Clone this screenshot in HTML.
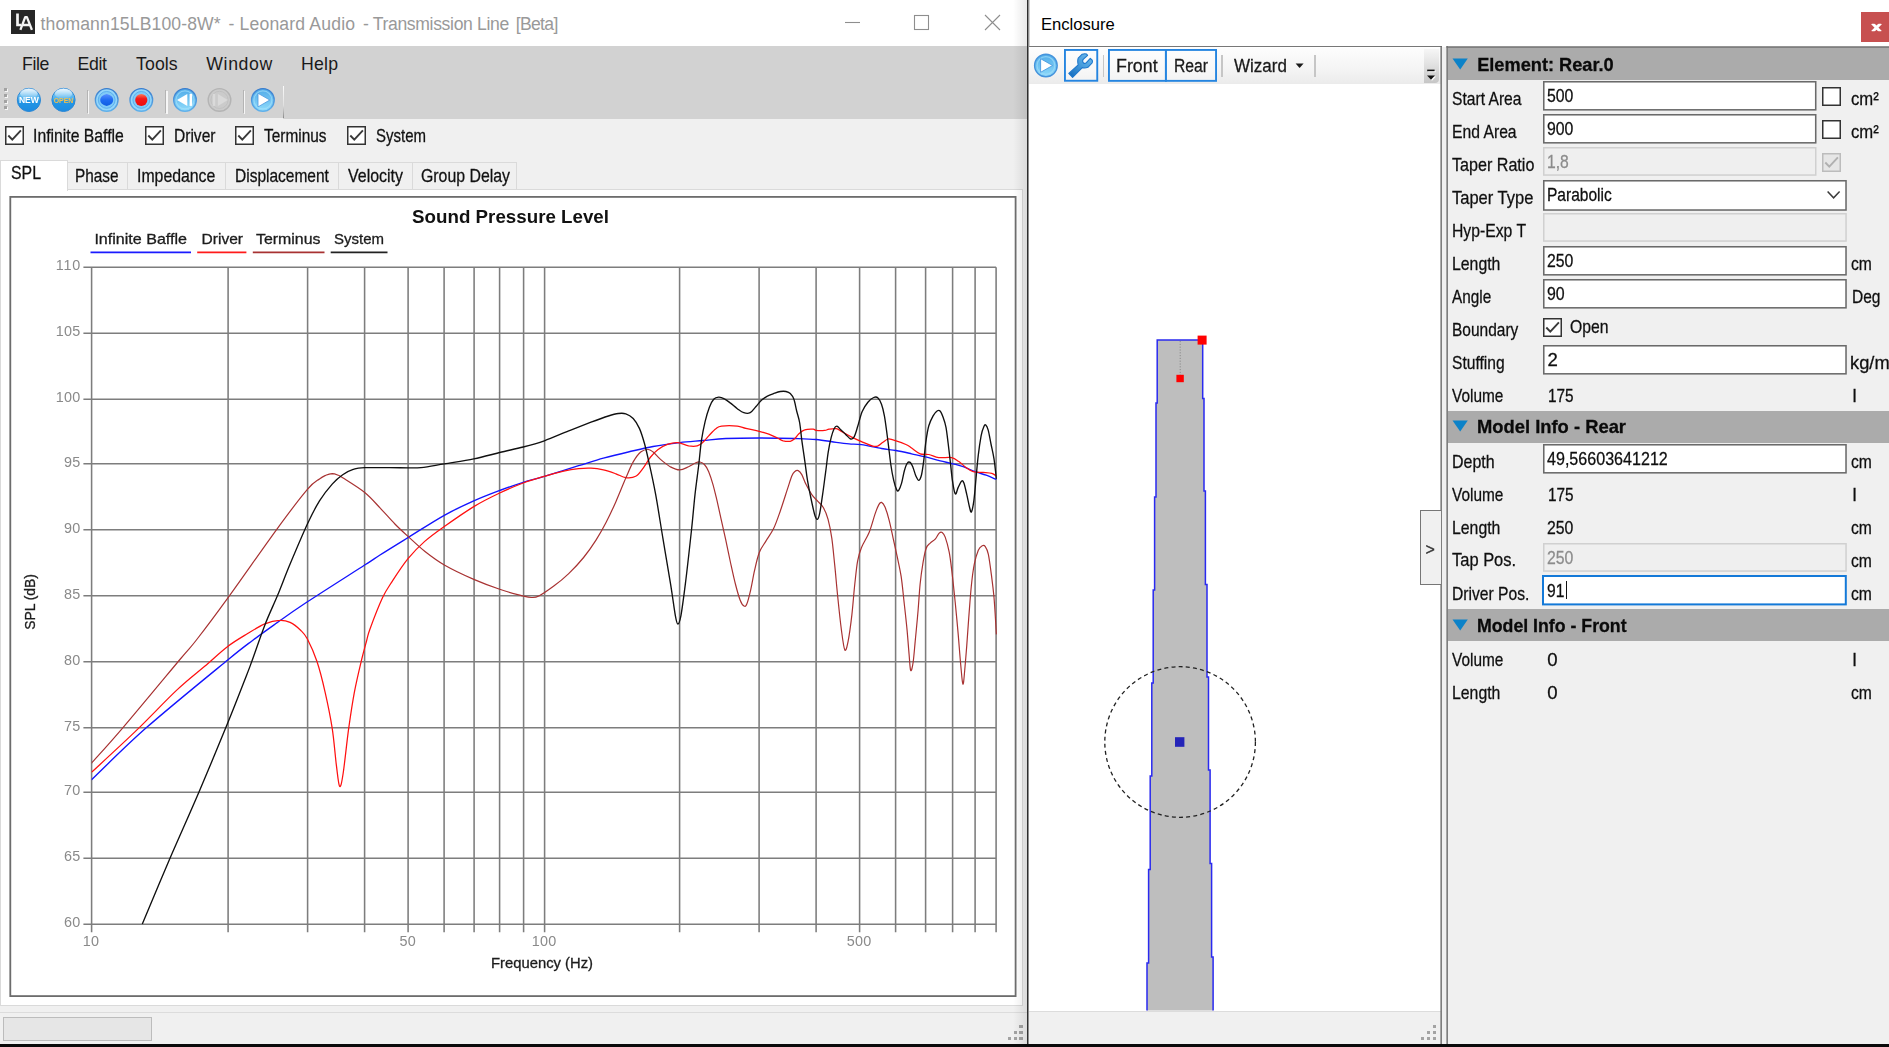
<!DOCTYPE html>
<html lang="en"><head><meta charset="utf-8"><title>Leonard Audio - Transmission Line</title>
<style>
html,body{margin:0;padding:0;}
body{width:1889px;height:1047px;overflow:hidden;position:relative;background:#f0f0f0;font-family:"Liberation Sans",sans-serif;}
.a{position:absolute;box-sizing:border-box;}
.t{position:absolute;white-space:nowrap;transform-origin:0 0;}
svg{position:absolute;overflow:visible;}
.soft{filter:blur(0.45px);}
span.soft{-webkit-text-stroke:0.28px currentColor;}
</style></head><body>

<div id="mainwin">
<div class="a" style="left:0px;top:0px;width:1027px;height:46px;background:#ffffff;"></div>
<svg class="soft" style="left:11px;top:10px" width="24" height="24" viewBox="0 0 24 24"><rect width="24" height="24" fill="#262626"/><path d="M6.5 3.6 V15 H10" fill="none" stroke="#f4f4f4" stroke-width="2.7"/><path d="M9.4 19.8 L14.2 7.2 H15.9 L20.9 19.8 M11.6 15 H18.8" fill="none" stroke="#f4f4f4" stroke-width="2.3" stroke-linejoin="round"/></svg>
<span id="t1" class="t " style="left:40.6px;top:15.60px;font-size:17.6px;line-height:17.6px;color:#999999;letter-spacing:0.123px;">thomann15LB100-8W*</span>
<span id="t2" class="t " style="left:228.4px;top:15.60px;font-size:17.6px;line-height:17.6px;color:#999999;">-</span>
<span id="t3" class="t " style="left:239.6px;top:15.60px;font-size:17.6px;line-height:17.6px;color:#999999;letter-spacing:0.160px;">Leonard Audio</span>
<span id="t4" class="t " style="left:362.9px;top:15.60px;font-size:17.6px;line-height:17.6px;color:#999999;">-</span>
<span id="t5" class="t " style="left:372.7px;top:15.60px;font-size:17.6px;line-height:17.6px;color:#999999;letter-spacing:-0.344px;">Transmission Line</span>
<span id="t6" class="t " style="left:515.7px;top:15.60px;font-size:17.6px;line-height:17.6px;color:#999999;letter-spacing:-0.677px;">[Beta]</span>
<svg style="left:830px;top:0" width="197" height="46" viewBox="830 0 197 46"><path d="M845 22.5 H860" stroke="#8e8e8e" stroke-width="1.1" fill="none"/><rect x="914.5" y="15.5" width="14" height="14" stroke="#8e8e8e" stroke-width="1.1" fill="none"/><path d="M985 15 L1000 30 M1000 15 L985 30" stroke="#8e8e8e" stroke-width="1.1" fill="none"/></svg>
<div class="a" style="left:0px;top:46px;width:1027px;height:73px;background:#d2d2d2;"></div>
<span id="t7" class="t " style="left:22px;top:55.72px;font-size:17.7px;line-height:17.7px;color:#1a1a1a;letter-spacing:-0.405px;">File</span>
<span id="t8" class="t " style="left:77.4px;top:55.72px;font-size:17.7px;line-height:17.7px;color:#1a1a1a;letter-spacing:-0.295px;">Edit</span>
<span id="t9" class="t " style="left:136px;top:55.72px;font-size:17.7px;line-height:17.7px;color:#1a1a1a;letter-spacing:0.101px;">Tools</span>
<span id="t10" class="t " style="left:206.3px;top:55.72px;font-size:17.7px;line-height:17.7px;color:#1a1a1a;letter-spacing:0.616px;">Window</span>
<span id="t11" class="t " style="left:301px;top:55.72px;font-size:17.7px;line-height:17.7px;color:#1a1a1a;letter-spacing:0.203px;">Help</span>
<div class="a" style="left:0px;top:117.8px;width:283.4px;height:1.4px;background:#f0f0f0;"></div>
<div class="a" style="left:282.6px;top:86px;width:1.6px;height:32px;background:linear-gradient(#fafafa,#e0e0e0 60%,#8a8a8a);"></div>
<div class="a" style="left:5.4px;top:89.2px;width:2.8px;height:2.8px;background:#f6f6f6;"></div>
<div class="a" style="left:4.0px;top:87.9px;width:2.7px;height:2.7px;background:#a2a2a2;"></div>
<div class="a" style="left:5.4px;top:95.2px;width:2.8px;height:2.8px;background:#f6f6f6;"></div>
<div class="a" style="left:4.0px;top:93.9px;width:2.7px;height:2.7px;background:#a2a2a2;"></div>
<div class="a" style="left:5.4px;top:101.2px;width:2.8px;height:2.8px;background:#f6f6f6;"></div>
<div class="a" style="left:4.0px;top:99.9px;width:2.7px;height:2.7px;background:#a2a2a2;"></div>
<div class="a" style="left:5.4px;top:107.2px;width:2.8px;height:2.8px;background:#f6f6f6;"></div>
<div class="a" style="left:4.0px;top:105.9px;width:2.7px;height:2.7px;background:#a2a2a2;"></div>
<div class="a" style="left:86.7px;top:90px;width:1.3px;height:23px;background:#b4b4b4;"></div>
<div class="a" style="left:88.0px;top:90.5px;width:1.3px;height:23px;background:#f6f6f6;"></div>
<div class="a" style="left:165px;top:90px;width:1.3px;height:23px;background:#b4b4b4;"></div>
<div class="a" style="left:166.3px;top:90.5px;width:1.3px;height:23px;background:#f6f6f6;"></div>
<div class="a" style="left:242.8px;top:90px;width:1.3px;height:23px;background:#b4b4b4;"></div>
<div class="a" style="left:244.10000000000002px;top:90.5px;width:1.3px;height:23px;background:#f6f6f6;"></div>
<svg class="soft" style="left:0;top:83px" width="290" height="36" viewBox="0 83 290 36"><defs><linearGradient id="orbg" x1="0" y1="0" x2="0" y2="1"><stop offset="0" stop-color="#8fd0f6"/><stop offset="0.42" stop-color="#55b4ee"/><stop offset="0.55" stop-color="#2397e6"/><stop offset="1" stop-color="#1c8be0"/></linearGradient><linearGradient id="orbh" x1="0" y1="0" x2="0" y2="1"><stop offset="0" stop-color="#ffffff" stop-opacity="0.85"/><stop offset="1" stop-color="#ffffff" stop-opacity="0.05"/></linearGradient><radialGradient id="orbl" cx="0.5" cy="0.5" r="0.5"><stop offset="0" stop-color="#7fc8ff"/><stop offset="0.7" stop-color="#8fd0ff"/><stop offset="1" stop-color="#4aa2e6"/></radialGradient></defs><circle cx="28.9" cy="99.9" r="11.6" fill="url(#orbg)" stroke="#2a86d4" stroke-width="1"/><ellipse cx="28.9" cy="93.60000000000001" rx="8.8" ry="5.2" fill="url(#orbh)"/><text x="28.9" y="103.10000000000001" font-family="Liberation Sans,sans-serif" font-size="8.6" font-weight="bold" fill="#ffffff" text-anchor="middle" textLength="20" lengthAdjust="spacingAndGlyphs">NEW</text><circle cx="63.5" cy="99.9" r="11.6" fill="url(#orbg)" stroke="#2a86d4" stroke-width="1"/><ellipse cx="63.5" cy="93.60000000000001" rx="8.8" ry="5.2" fill="url(#orbh)"/><text x="63.5" y="102.9" font-family="Liberation Sans,sans-serif" font-size="7.8" font-weight="bold" fill="#f7c04a" text-anchor="middle" textLength="19.5" lengthAdjust="spacingAndGlyphs">OPEN</text><defs><linearGradient id="orbp" x1="0" y1="0" x2="0" y2="1"><stop offset="0" stop-color="#50aae8"/><stop offset="1" stop-color="#90dcfb"/></linearGradient><linearGradient id="orbs" x1="0" y1="0" x2="0" y2="1"><stop offset="0" stop-color="#3a7ccc"/><stop offset="1" stop-color="#5fb0ea"/></linearGradient><linearGradient id="bdot" x1="0" y1="0" x2="0" y2="1"><stop offset="0" stop-color="#5a90ff"/><stop offset="0.5" stop-color="#1f6cf2"/><stop offset="1" stop-color="#0f5ce0"/></linearGradient><linearGradient id="rdot" x1="0" y1="0" x2="0" y2="1"><stop offset="0" stop-color="#ff7a5a"/><stop offset="0.4" stop-color="#f51818"/><stop offset="1" stop-color="#ee0c0c"/></linearGradient></defs><circle cx="106.7" cy="99.9" r="11.3" fill="#93d6fb" stroke="url(#orbs)" stroke-width="1.4"/><circle cx="106.7" cy="99.9" r="8.4" fill="#80caf8" stroke="#5cb0ee" stroke-width="1.0"/><path d="M100.2 100.0 Q100.2 95.5 106.7 93.9 Q113.2 95.5 113.2 100.0 Q113.2 104.5 106.7 106.10000000000001 Q100.2 104.5 100.2 100.0 Z" fill="url(#bdot)"/><circle cx="141.3" cy="99.9" r="11.3" fill="#93d6fb" stroke="url(#orbs)" stroke-width="1.4"/><circle cx="141.3" cy="99.9" r="8.4" fill="#80caf8" stroke="#5cb0ee" stroke-width="1.0"/><circle cx="141.3" cy="100.0" r="6.1" fill="url(#rdot)"/><circle cx="185" cy="99.9" r="11.3" fill="url(#orbp)" stroke="url(#orbs)" stroke-width="1.4"/><circle cx="185" cy="99.9" r="9.0" fill="none" stroke="#a6e0fb" stroke-width="1.1" opacity="0.65"/><path d="M177 99.9 L187.3 93.9 V105.9 Z" fill="#ffffff"/><rect x="189.6" y="93.9" width="2.5" height="12" fill="#ffffff"/><circle cx="219.5" cy="99.9" r="11.3" fill="#cbcbcb" stroke="#b4b4b4" stroke-width="1.4"/><circle cx="219.5" cy="99.9" r="8.6" fill="none" stroke="#c0c0c0" stroke-width="0.9"/><path d="M227.8 99.9 L217.9 93.9 V105.9 Z" fill="#dadada"/><rect x="212.7" y="93.9" width="2.5" height="12" fill="#dadada"/><circle cx="262.9" cy="99.9" r="11.3" fill="url(#orbp)" stroke="url(#orbs)" stroke-width="1.4"/><circle cx="262.9" cy="99.9" r="9.0" fill="none" stroke="#a6e0fb" stroke-width="1.1" opacity="0.65"/><path d="M269.8 100.0 L258 93.30000000000001 V106.9 Z" fill="#ffffff" stroke="#4a98de" stroke-width="0.8" stroke-linejoin="round"/></svg>
<svg class="soft" style="left:5.3px;top:125.7px" width="19" height="19" viewBox="0 0 19 19"><rect x="0.75" y="0.75" width="17.5" height="17.5" fill="#ffffff" stroke="#333333" stroke-width="1.5"/><path d="M3.3 9.5 L7.3 13.7 L15.9 4.3" fill="none" stroke="#3a3a3a" stroke-width="1.9"/></svg>
<span id="t12" class="t soft" style="left:33.4px;top:126.76px;font-size:18.6px;line-height:18.6px;color:#111;transform:scaleX(0.8472);">Infinite Baffle</span>
<svg class="soft" style="left:144.6px;top:125.7px" width="19" height="19" viewBox="0 0 19 19"><rect x="0.75" y="0.75" width="17.5" height="17.5" fill="#ffffff" stroke="#333333" stroke-width="1.5"/><path d="M3.3 9.5 L7.3 13.7 L15.9 4.3" fill="none" stroke="#3a3a3a" stroke-width="1.9"/></svg>
<span id="t13" class="t soft" style="left:173.5px;top:126.76px;font-size:18.6px;line-height:18.6px;color:#111;transform:scaleX(0.8368);">Driver</span>
<svg class="soft" style="left:234.6px;top:125.7px" width="19" height="19" viewBox="0 0 19 19"><rect x="0.75" y="0.75" width="17.5" height="17.5" fill="#ffffff" stroke="#333333" stroke-width="1.5"/><path d="M3.3 9.5 L7.3 13.7 L15.9 4.3" fill="none" stroke="#3a3a3a" stroke-width="1.9"/></svg>
<span id="t14" class="t soft" style="left:263.7px;top:126.76px;font-size:18.6px;line-height:18.6px;color:#111;transform:scaleX(0.8285);">Terminus</span>
<svg class="soft" style="left:346.7px;top:125.7px" width="19" height="19" viewBox="0 0 19 19"><rect x="0.75" y="0.75" width="17.5" height="17.5" fill="#ffffff" stroke="#333333" stroke-width="1.5"/><path d="M3.3 9.5 L7.3 13.7 L15.9 4.3" fill="none" stroke="#3a3a3a" stroke-width="1.9"/></svg>
<span id="t15" class="t soft" style="left:376px;top:126.76px;font-size:18.6px;line-height:18.6px;color:#111;transform:scaleX(0.8065);">System</span>
<div class="a" style="left:0px;top:189px;width:1023px;height:817px;background:#ffffff;border:1px solid #dadada;"></div>
<div class="a" style="left:66.9px;top:161.8px;width:61.099999999999994px;height:28.2px;background:#f0f0f0;border:1px solid #dadada;"></div>
<span id="t16" class="t soft" style="left:74.5px;top:167.36px;font-size:18.6px;line-height:18.6px;color:#111;transform:scaleX(0.8249);">Phase</span>
<div class="a" style="left:127px;top:161.8px;width:98.5px;height:28.2px;background:#f0f0f0;border:1px solid #dadada;"></div>
<span id="t17" class="t soft" style="left:137.2px;top:167.36px;font-size:18.6px;line-height:18.6px;color:#111;transform:scaleX(0.8511);">Impedance</span>
<div class="a" style="left:224.5px;top:161.8px;width:114.80000000000001px;height:28.2px;background:#f0f0f0;border:1px solid #dadada;"></div>
<span id="t18" class="t soft" style="left:235.4px;top:167.36px;font-size:18.6px;line-height:18.6px;color:#111;transform:scaleX(0.8335);">Displacement</span>
<div class="a" style="left:338.3px;top:161.8px;width:75.0px;height:28.2px;background:#f0f0f0;border:1px solid #dadada;"></div>
<span id="t19" class="t soft" style="left:348.3px;top:167.36px;font-size:18.6px;line-height:18.6px;color:#111;transform:scaleX(0.8581);">Velocity</span>
<div class="a" style="left:412.3px;top:161.8px;width:104.40000000000003px;height:28.2px;background:#f0f0f0;border:1px solid #dadada;"></div>
<span id="t20" class="t soft" style="left:421px;top:167.36px;font-size:18.6px;line-height:18.6px;color:#111;transform:scaleX(0.8526);">Group Delay</span>
<div class="a" style="left:0px;top:159.5px;width:68px;height:31px;background:#ffffff;border:1px solid #dadada;border-bottom:none;"></div>
<span id="t21" class="t soft" style="left:11px;top:164.36px;font-size:18.6px;line-height:18.6px;color:#111;transform:scaleX(0.8533);">SPL</span>
<div class="a" style="left:0px;top:1012px;width:1027px;height:1px;background:#dcdcdc;"></div>
<div class="a" style="left:3px;top:1017px;width:149px;height:23.5px;background:#e6e6e6;border:1px solid #bcbcbc;"></div>
<div class="a" style="left:1019.4px;top:1025.3px;width:3.2px;height:3.2px;background:#a3a3a3;"></div>
<div class="a" style="left:1013.5px;top:1031.2px;width:3.2px;height:3.2px;background:#a3a3a3;"></div>
<div class="a" style="left:1019.4px;top:1031.2px;width:3.2px;height:3.2px;background:#a3a3a3;"></div>
<div class="a" style="left:1007.6px;top:1037.1px;width:3.2px;height:3.2px;background:#a3a3a3;"></div>
<div class="a" style="left:1013.5px;top:1037.1px;width:3.2px;height:3.2px;background:#a3a3a3;"></div>
<div class="a" style="left:1019.4px;top:1037.1px;width:3.2px;height:3.2px;background:#a3a3a3;"></div>
<div class="a" style="left:1013px;top:0;width:14px;height:1044px;background:linear-gradient(to right,rgba(0,0,0,0),rgba(0,0,0,0.085));"></div>
<div class="a" style="left:1026.7px;top:0px;width:1.8px;height:1044px;background:#2e2e2e;"></div>
<div class="a" style="left:1028.4px;top:0;width:1.6px;height:1044px;background:linear-gradient(to right,#6e6e6e,#f2f2f2);"></div>
</div>
<svg id="chart" class="soft" style="left:0;top:0" width="1027" height="1010" viewBox="0 0 1027 1010" font-family="Liberation Sans,sans-serif"><rect x="10.3" y="196.9" width="1005.3" height="799.2" fill="#ffffff" stroke="#6c6c6c" stroke-width="1.8"/><path d="M91.60 267.20V932.15M228.10 267.20V932.15M307.60 267.20V932.15M364.60 267.20V932.15M408.10 267.20V932.15M444.10 267.20V932.15M474.10 267.20V932.15M499.60 267.20V932.15M523.60 267.20V932.15M544.60 267.20V932.15M679.60 267.20V932.15M759.10 267.20V932.15M816.10 267.20V932.15M859.60 267.20V932.15M895.60 267.20V932.15M925.60 267.20V932.15M952.60 267.20V932.15M975.10 267.20V932.15M996.10 267.20V932.15M83.40 924.15H996.10M83.40 858.15H996.10M83.40 792.15H996.10M83.40 727.65H996.10M83.40 661.65H996.10M83.40 595.65H996.10M83.40 529.65H996.10M83.40 463.65H996.10M83.40 399.15H996.10M83.40 333.15H996.10M83.40 267.15H996.10" stroke="#7d7d7d" stroke-width="1.55" fill="none"/><clipPath id="plotclip"><rect x="91.60" y="267.20" width="905.30" height="657.55"/></clipPath><g clip-path="url(#plotclip)"><path d="M91.4 779.9C100.6 771.2 123.8 747.6 146.5 727.6C169.2 707.6 209.9 674.6 227.7 660.0C245.5 645.4 244.9 646.3 253.2 640.0C261.5 633.7 268.5 628.8 277.5 622.4C286.5 616.0 292.9 611.4 307.4 601.8C321.9 592.2 352.6 572.8 364.7 565.0C376.8 557.2 372.8 559.6 380.0 555.0C387.2 550.4 397.3 544.2 408.0 537.6C418.7 531.0 433.3 521.4 444.3 515.3C455.3 509.2 464.6 505.0 473.8 500.9C483.0 496.8 491.5 493.6 499.7 490.5C507.9 487.4 515.8 484.7 523.2 482.3C530.6 479.9 535.1 479.1 544.3 476.3C553.5 473.5 568.8 468.7 578.6 465.7C588.5 462.7 595.1 460.5 603.4 458.2C611.7 455.9 620.0 453.9 628.3 452.0C636.6 450.1 644.5 448.1 653.1 446.5C661.7 444.9 671.4 443.6 679.7 442.6C688.0 441.6 695.3 441.2 703.0 440.5C710.7 439.8 716.5 438.9 725.9 438.5C735.3 438.1 747.8 438.0 759.2 438.0C770.7 438.0 785.1 438.2 794.6 438.5C804.1 438.8 809.2 438.9 816.1 439.5C823.0 440.1 830.7 441.6 836.2 442.3C841.7 443.0 844.9 443.4 849.1 443.8C853.3 444.2 856.1 443.9 861.5 444.7C866.9 445.5 875.8 447.5 881.5 448.5C887.2 449.5 890.9 449.6 895.9 450.5C900.9 451.4 906.6 452.7 911.6 453.8C916.6 454.9 920.8 455.7 925.6 456.9C930.4 458.1 935.8 459.8 940.3 460.9C944.8 462.0 949.1 462.8 952.9 463.8C956.7 464.8 959.5 465.4 963.2 466.7C966.9 468.0 971.5 470.3 975.3 471.7C979.1 473.1 982.6 473.9 986.1 475.2C989.6 476.5 994.7 478.8 996.4 479.5" fill="none" stroke="#1414ff" stroke-width="1.35" stroke-linejoin="round" stroke-linecap="butt"/><path d="M91.4 772.4C98.7 765.6 121.1 745.1 135.4 731.4C149.7 717.6 165.4 700.8 177.0 689.9C188.6 679.0 196.2 673.5 204.7 666.3C213.1 659.1 220.5 652.0 227.7 646.5C234.9 641.0 241.9 637.1 248.1 633.3C254.3 629.5 259.6 626.1 264.9 623.9C270.1 621.7 275.4 620.5 279.6 620.3C283.8 620.0 286.6 620.8 290.1 622.4C293.6 624.0 297.7 627.4 300.6 630.2C303.5 633.0 304.7 633.8 307.4 639.0C310.1 644.2 313.9 652.4 316.9 661.3C319.9 670.2 322.7 681.5 325.2 692.6C327.7 703.7 330.2 715.6 332.1 727.6C334.0 739.6 335.1 754.9 336.3 764.7C337.6 774.5 338.5 784.9 339.6 786.3C340.8 787.7 341.7 782.8 343.2 773.0C344.7 763.2 346.9 741.0 348.8 727.6C350.7 714.2 352.2 703.8 354.3 692.6C356.4 681.4 359.3 669.3 361.4 660.5C363.5 651.7 365.4 645.2 366.8 640.0C368.2 634.8 367.4 636.1 370.0 629.0C372.6 621.9 378.9 605.6 382.6 597.6C386.3 589.6 388.2 587.6 392.4 581.1C396.6 574.6 402.6 565.3 408.0 558.7C413.4 552.1 418.6 546.8 424.7 541.4C430.8 536.0 436.1 532.3 444.3 526.5C452.5 520.7 464.6 512.2 473.8 506.6C483.0 501.0 491.5 496.9 499.7 493.0C507.9 489.1 515.8 485.8 523.2 483.0C530.6 480.2 537.5 478.3 544.3 476.3C551.0 474.3 558.0 472.4 563.7 471.1C569.4 469.8 574.1 469.1 578.6 468.6C583.1 468.1 586.9 467.9 591.0 468.1C595.1 468.3 599.2 468.9 603.4 469.9C607.5 470.8 612.2 472.5 615.9 473.8C619.6 475.1 622.5 477.2 625.8 477.6C629.1 478.0 632.8 477.9 635.7 476.3C638.6 474.7 640.7 471.3 643.2 468.1C645.7 464.9 648.1 460.1 650.6 457.0C653.1 453.9 655.2 451.6 658.1 449.5C661.0 447.4 664.7 445.2 668.0 444.1C671.3 443.0 674.5 442.3 677.9 442.6C681.3 442.9 685.4 445.3 688.6 445.9C691.8 446.4 694.8 446.5 697.2 445.9C699.6 445.3 701.0 444.0 702.9 442.3C704.8 440.6 706.6 438.2 708.7 435.9C710.9 433.6 713.6 430.3 715.8 428.7C717.9 427.1 718.0 426.5 721.6 426.1C725.2 425.7 733.2 425.7 737.3 426.1C741.3 426.5 742.2 427.5 745.9 428.4C749.5 429.3 755.4 430.3 759.2 431.3C763.0 432.3 765.8 433.1 768.8 434.2C771.8 435.3 775.0 436.9 777.4 438.0C779.8 439.1 781.1 440.3 783.2 440.9C785.4 441.4 788.4 441.6 790.3 441.3C792.2 441.0 793.2 440.1 794.6 438.8C796.0 437.5 797.2 435.2 798.9 433.7C800.6 432.2 802.3 430.6 804.7 429.9C807.1 429.1 811.4 429.1 813.3 429.2C815.2 429.3 814.2 430.2 816.1 430.4C818.0 430.6 822.6 430.6 824.7 430.4C826.9 430.2 827.1 429.5 829.0 429.2C830.9 428.9 834.1 428.3 836.2 428.7C838.4 429.1 839.5 430.3 841.9 431.6C844.3 432.9 847.4 434.9 850.7 436.6C854.0 438.3 857.8 440.0 861.5 441.6C865.2 443.2 870.1 445.5 872.9 446.2C875.6 446.9 876.3 446.5 878.0 445.9C879.7 445.2 881.3 443.4 883.0 442.3C884.7 441.2 886.3 439.4 888.0 439.0C889.7 438.6 890.0 439.0 893.0 439.9C896.0 440.8 902.8 443.1 905.9 444.5C909.0 445.9 909.2 446.4 911.6 448.0C914.0 449.6 917.3 452.7 920.2 453.8C923.1 454.9 925.7 453.9 928.8 454.5C931.9 455.1 935.0 457.1 938.8 457.6C942.6 458.1 948.4 456.9 951.7 457.6C955.1 458.3 956.5 460.0 958.9 461.6C961.3 463.2 963.6 465.7 966.0 467.4C968.4 469.1 970.3 470.9 973.2 471.7C976.1 472.5 980.1 472.1 983.2 472.4C986.3 472.7 989.6 472.8 991.8 473.4C994.0 474.0 995.6 475.6 996.4 476.0" fill="none" stroke="#ff1010" stroke-width="1.25" stroke-linejoin="round" stroke-linecap="butt"/><path d="M91.4 763.3C96.7 757.3 108.3 744.8 123.0 727.6C137.7 710.4 167.3 674.6 179.5 660.0C191.7 645.4 188.3 650.4 196.4 640.0C204.5 629.6 214.6 616.2 228.1 597.6C241.6 579.0 264.3 546.3 277.5 528.3C290.7 510.3 300.4 497.6 307.4 489.4C314.4 481.2 316.4 481.2 319.5 478.9C322.6 476.5 323.7 476.2 325.8 475.3C327.9 474.4 330.2 473.7 332.2 473.6C334.2 473.6 335.9 474.3 337.6 475.0C339.4 475.7 338.2 474.9 342.7 477.8C347.2 480.7 358.5 487.5 364.7 492.5C370.9 497.5 375.0 502.6 380.0 507.9C385.0 513.1 390.2 519.2 394.9 524.0C399.6 528.8 403.0 531.9 408.0 536.4C413.0 540.9 418.6 546.5 424.7 551.3C430.8 556.1 436.1 560.3 444.3 565.0C452.5 569.7 464.6 575.4 473.8 579.4C483.0 583.4 491.5 586.5 499.7 589.3C507.9 592.1 517.9 594.6 523.2 596.0C528.5 597.4 528.8 597.5 531.4 597.5C534.0 597.5 535.2 597.9 538.9 596.0C542.6 594.1 548.8 589.8 553.8 586.1C558.8 582.4 563.7 578.4 568.7 573.6C573.7 568.8 579.1 563.1 583.6 557.5C588.1 551.9 592.3 545.9 596.0 540.1C599.7 534.3 602.6 529.2 605.9 522.8C609.2 516.4 612.6 509.1 615.9 501.7C619.2 494.2 622.9 484.7 625.8 478.1C628.7 471.5 630.7 466.2 633.2 461.9C635.7 457.5 638.2 454.1 640.7 452.0C643.2 449.9 646.0 449.5 648.1 449.5C650.2 449.5 651.0 450.4 653.1 452.0C655.2 453.6 657.6 456.9 660.5 459.4C663.4 461.9 667.3 465.1 670.5 466.9C673.7 468.6 676.7 469.9 679.7 469.9C682.7 469.9 685.9 467.9 688.6 466.7C691.3 465.5 693.9 463.6 695.8 462.8C697.7 462.0 698.6 461.7 700.0 462.0C701.4 462.3 702.9 462.9 704.4 464.5C705.9 466.1 707.3 468.3 708.7 471.7C710.1 475.1 711.6 479.6 713.0 484.6C714.4 489.6 715.9 496.1 717.3 501.8C718.6 507.6 719.7 512.7 721.1 519.1C722.5 525.5 724.2 532.8 725.8 540.1C727.4 547.4 729.0 555.7 730.6 563.0C732.2 570.3 733.8 577.8 735.4 584.0C737.0 590.2 738.8 596.6 740.2 600.3C741.6 604.0 742.9 605.4 744.0 606.0C745.1 606.6 745.7 606.8 746.8 604.1C747.9 601.4 749.4 595.4 750.7 589.8C752.0 584.2 753.1 576.9 754.5 570.7C755.9 564.5 757.4 557.4 759.3 552.5C761.2 547.6 763.5 545.1 765.9 541.1C768.3 537.1 771.2 533.6 773.6 528.6C776.0 523.6 778.0 517.6 780.3 511.0C782.6 504.4 785.6 494.7 787.5 488.9C789.4 483.1 790.6 478.9 791.8 476.0C793.0 473.1 793.5 472.6 794.6 471.7C795.7 470.8 797.0 470.1 798.2 470.6C799.4 471.1 800.5 472.3 801.8 474.6C803.1 476.9 804.4 481.3 806.1 484.6C807.8 487.9 809.9 491.9 811.8 494.6C813.7 497.4 815.7 499.0 817.6 501.1C819.5 503.2 821.6 504.5 823.3 507.5C825.0 510.5 826.6 514.0 828.0 519.1C829.4 524.2 830.7 530.6 831.8 538.2C832.9 545.8 833.7 555.4 834.7 564.9C835.7 574.4 836.5 584.7 837.6 595.5C838.7 606.3 840.2 620.8 841.4 629.9C842.6 639.0 843.7 648.0 844.8 649.9C845.9 651.8 846.9 647.2 848.1 641.3C849.3 635.4 850.8 624.1 851.9 614.6C853.0 605.1 853.8 592.9 854.8 584.0C855.8 575.1 856.5 567.1 857.6 561.1C858.7 555.1 859.5 552.5 861.4 547.7C863.3 542.9 866.8 538.1 869.1 532.5C871.4 526.9 873.4 518.8 875.0 514.1C876.6 509.4 877.9 506.3 879.0 504.4C880.1 502.4 880.6 502.0 881.6 502.4C882.6 502.8 883.8 504.1 885.0 507.0C886.2 509.9 887.8 514.9 889.1 520.1C890.5 525.3 891.8 532.1 893.1 538.1C894.4 544.1 895.8 549.9 897.1 556.2C898.4 562.6 899.9 568.5 901.1 576.2C902.3 583.9 903.1 593.3 904.1 602.3C905.1 611.3 906.3 621.7 907.1 630.4C907.9 639.1 908.5 647.8 909.1 654.5C909.7 661.2 910.0 669.2 910.7 670.5C911.4 671.8 912.4 667.2 913.1 662.5C913.8 657.8 914.3 651.1 915.1 642.4C915.9 633.7 917.3 620.0 918.1 610.3C918.9 600.6 919.3 592.3 920.1 584.3C920.9 576.3 922.1 568.2 923.1 562.2C924.1 556.2 925.0 551.4 926.2 548.2C927.4 545.0 928.7 544.6 930.2 543.1C931.7 541.6 933.7 540.8 935.2 539.1C936.7 537.4 938.0 534.2 939.2 533.1C940.4 532.0 941.2 531.8 942.2 532.5C943.2 533.2 944.0 533.8 945.2 537.1C946.4 540.4 948.0 546.0 949.2 552.2C950.4 558.4 951.2 565.9 952.2 574.2C953.2 582.6 954.2 592.3 955.2 602.3C956.2 612.3 957.3 624.0 958.2 634.4C959.1 644.8 959.9 656.2 960.7 664.5C961.5 672.8 962.2 683.1 962.9 684.1C963.6 685.1 964.1 676.8 964.7 670.5C965.3 664.2 966.0 655.1 966.7 646.4C967.4 637.7 967.9 628.4 968.7 618.4C969.5 608.4 970.4 595.3 971.3 586.3C972.2 577.3 973.1 570.2 974.3 564.2C975.5 558.2 977.0 553.3 978.3 550.2C979.6 547.1 981.1 546.4 982.3 545.8C983.5 545.2 984.3 545.2 985.3 546.6C986.3 548.0 987.3 549.6 988.3 554.2C989.3 558.8 990.4 567.2 991.3 574.2C992.2 581.2 993.0 586.3 993.9 596.3C994.8 606.3 996.0 628.0 996.4 634.4" fill="none" stroke="#a83232" stroke-width="1.2" stroke-linejoin="round" stroke-linecap="butt"/><path d="M142.3 924.0C146.9 913.0 160.5 880.3 170.0 858.3C179.5 836.3 189.5 814.3 199.1 791.8C208.7 769.3 219.8 742.4 227.7 723.1C235.6 703.8 242.2 686.5 246.3 676.0C250.4 665.5 249.2 668.5 252.3 660.0C255.4 651.5 260.7 635.6 264.9 624.9C269.1 614.1 273.3 605.6 277.5 595.5C281.7 585.4 285.1 575.9 290.1 564.0C295.1 552.1 302.5 534.5 307.4 524.0C312.3 513.5 315.4 507.5 319.5 500.9C323.6 494.2 328.3 488.5 332.2 484.1C336.1 479.7 339.2 477.1 342.7 474.7C346.2 472.2 349.5 470.6 353.2 469.4C356.9 468.2 356.9 468.0 364.7 467.7C372.5 467.4 390.6 467.7 400.0 467.7C409.4 467.7 413.6 468.2 421.0 467.6C428.4 467.0 435.5 465.3 444.3 463.9C453.1 462.4 464.6 460.8 473.8 458.9C483.0 457.0 491.5 454.5 499.7 452.5C507.9 450.5 515.8 448.9 523.2 447.0C530.6 445.1 536.7 443.5 544.3 440.8C551.9 438.1 560.9 434.0 568.7 430.9C576.5 427.8 584.4 424.7 591.0 422.2C597.6 419.7 603.9 417.4 608.4 416.0C612.9 414.6 615.4 413.9 618.3 413.5C621.2 413.1 623.3 413.0 625.8 413.8C628.3 414.6 630.9 416.1 633.2 418.5C635.5 420.9 637.5 424.3 639.4 428.4C641.3 432.5 642.7 437.3 644.4 443.3C646.1 449.3 647.5 455.9 649.4 464.4C651.3 472.9 653.3 481.8 655.6 494.2C657.9 506.6 660.5 524.0 663.0 538.9C665.5 553.8 668.4 570.8 670.5 583.6C672.6 596.4 674.2 609.1 675.4 615.8C676.6 622.5 677.0 624.0 677.9 624.0C678.8 624.0 679.6 622.5 680.9 615.8C682.1 609.1 683.6 597.9 685.4 583.6C687.2 569.3 689.9 544.8 691.5 530.0C693.1 515.2 693.8 505.3 695.0 494.6C696.2 483.9 697.5 475.1 698.6 466.0C699.7 456.9 700.4 447.6 701.5 440.2C702.6 432.8 703.8 427.1 705.1 421.6C706.4 416.1 708.0 410.9 709.4 407.2C710.8 403.5 712.2 401.0 713.7 399.3C715.2 397.6 716.9 397.3 718.7 397.2C720.5 397.1 722.5 397.9 724.4 398.9C726.3 399.8 728.1 401.3 730.2 402.9C732.4 404.5 735.0 407.1 737.3 408.7C739.6 410.3 741.6 412.0 743.8 412.7C745.9 413.4 748.2 413.7 750.2 412.7C752.2 411.7 754.1 408.6 756.0 406.5C757.9 404.4 759.8 401.8 761.7 400.1C763.6 398.4 765.2 397.2 767.4 396.1C769.5 395.0 772.5 394.0 774.6 393.2C776.8 392.4 778.4 391.8 780.3 391.5C782.2 391.2 784.3 391.1 786.0 391.5C787.7 391.9 789.0 392.3 790.3 393.6C791.6 394.9 792.8 396.3 793.9 399.3C795.0 402.3 795.8 407.6 796.8 411.5C797.8 415.4 798.9 418.2 799.7 423.0C800.5 427.8 801.0 434.0 801.8 440.2C802.6 446.4 803.8 453.6 804.7 460.3C805.7 467.0 806.4 473.9 807.5 480.3C808.6 486.8 809.9 493.3 811.1 499.0C812.3 504.7 813.7 511.3 814.7 514.7C815.7 518.1 816.5 519.5 817.3 519.3C818.1 519.1 818.8 517.4 819.7 513.3C820.6 509.2 821.6 501.3 822.6 494.6C823.6 487.9 824.5 480.4 825.5 473.2C826.5 466.0 827.3 457.7 828.3 451.7C829.2 445.7 830.2 441.1 831.2 437.3C832.2 433.5 833.2 430.6 834.1 428.7C835.0 426.8 835.8 426.0 836.9 426.1C838.0 426.2 839.0 428.0 840.5 429.4C842.0 430.8 844.0 432.8 845.7 434.4C847.4 436.0 849.3 438.6 850.7 439.0C852.1 439.4 853.1 438.8 854.3 436.6C855.5 434.4 856.6 430.0 857.9 425.8C859.2 421.6 860.5 415.4 862.2 411.5C863.9 407.6 866.0 404.5 867.9 402.2C869.8 399.9 872.0 398.2 873.7 397.5C875.4 396.8 876.7 396.8 878.0 397.9C879.3 399.0 880.4 401.3 881.5 404.3C882.6 407.3 883.6 411.5 884.4 415.8C885.2 420.1 885.8 424.9 886.5 430.1C887.2 435.4 888.0 441.6 888.7 447.3C889.4 453.0 890.0 459.0 890.8 464.5C891.6 470.0 892.7 476.1 893.7 480.3C894.7 484.5 895.8 487.9 896.6 489.6C897.4 491.3 897.9 491.4 898.7 490.3C899.5 489.2 900.6 486.5 901.6 483.1C902.6 479.8 903.5 473.5 904.5 470.2C905.5 466.9 906.3 464.4 907.3 463.1C908.2 461.8 909.2 461.7 910.2 462.4C911.2 463.1 912.0 465.1 913.0 467.4C914.0 469.7 914.9 473.9 915.9 476.0C916.9 478.1 917.8 480.6 918.8 480.3C919.8 480.1 920.8 477.9 921.6 474.5C922.4 471.1 923.1 465.7 923.8 460.2C924.5 454.7 925.1 447.3 925.9 441.6C926.7 435.9 927.6 430.1 928.8 425.8C930.0 421.5 931.7 418.3 933.1 415.8C934.5 413.3 936.2 411.6 937.4 410.8C938.6 410.0 939.3 410.1 940.3 411.2C941.2 412.3 942.1 414.5 943.1 417.2C944.1 419.9 945.2 423.0 946.0 427.3C946.8 431.6 947.4 437.3 948.1 443.0C948.8 448.7 949.6 455.4 950.3 461.6C951.0 467.8 951.6 474.9 952.4 480.3C953.2 485.7 954.3 492.7 955.3 493.9C956.3 495.1 957.1 489.5 958.2 487.4C959.3 485.2 960.8 481.7 961.7 481.0C962.7 480.3 963.0 480.8 963.9 483.1C964.8 485.4 965.8 490.5 966.8 494.6C967.8 498.7 968.8 504.6 969.6 507.5C970.4 510.4 970.8 513.0 971.5 511.8C972.2 510.6 973.1 506.0 973.9 500.3C974.7 494.6 975.4 484.8 976.1 477.4C976.8 470.0 977.4 462.8 978.2 455.9C979.0 449.0 980.2 440.8 981.1 435.9C982.0 431.0 983.1 428.3 983.9 426.5C984.7 424.7 985.1 424.5 985.8 425.1C986.5 425.7 987.3 426.9 988.2 430.1C989.1 433.3 990.1 439.7 991.1 444.5C992.1 449.3 993.1 453.1 994.0 458.8C994.9 464.5 996.0 475.5 996.4 478.8" fill="none" stroke="#101010" stroke-width="1.35" stroke-linejoin="round" stroke-linecap="butt"/></g><text x="64.0" y="927.2" font-size="14.4" fill="#8a8a8a" textLength="16.3" lengthAdjust="spacing">60</text><text x="64.0" y="861.2" font-size="14.4" fill="#8a8a8a" textLength="16.3" lengthAdjust="spacing">65</text><text x="64.0" y="795.2" font-size="14.4" fill="#8a8a8a" textLength="16.3" lengthAdjust="spacing">70</text><text x="64.0" y="730.7" font-size="14.4" fill="#8a8a8a" textLength="16.3" lengthAdjust="spacing">75</text><text x="64.0" y="664.7" font-size="14.4" fill="#8a8a8a" textLength="16.3" lengthAdjust="spacing">80</text><text x="64.0" y="598.7" font-size="14.4" fill="#8a8a8a" textLength="16.3" lengthAdjust="spacing">85</text><text x="64.0" y="532.7" font-size="14.4" fill="#8a8a8a" textLength="16.3" lengthAdjust="spacing">90</text><text x="64.0" y="466.6" font-size="14.4" fill="#8a8a8a" textLength="16.3" lengthAdjust="spacing">95</text><text x="55.8" y="402.1" font-size="14.4" fill="#8a8a8a" textLength="24.5" lengthAdjust="spacing">100</text><text x="55.8" y="336.1" font-size="14.4" fill="#8a8a8a" textLength="24.5" lengthAdjust="spacing">105</text><text x="55.8" y="270.1" font-size="14.4" fill="#8a8a8a" textLength="24.5" lengthAdjust="spacing">110</text><text x="82.8" y="946.3" font-size="14.4" fill="#8a8a8a" textLength="16.3" lengthAdjust="spacing">10</text><text x="399.4" y="946.3" font-size="14.4" fill="#8a8a8a" textLength="16.3" lengthAdjust="spacing">50</text><text x="531.8" y="946.3" font-size="14.4" fill="#8a8a8a" textLength="24.5" lengthAdjust="spacing">100</text><text x="846.8" y="946.3" font-size="14.4" fill="#8a8a8a" textLength="24.5" lengthAdjust="spacing">500</text><text x="412.1" y="222.9" font-size="18.6" font-weight="bold" fill="#111" textLength="196.9" lengthAdjust="spacingAndGlyphs">Sound Pressure Level</text><text x="491" y="967.6" font-size="14.4" fill="#1c1c1c" stroke="#1c1c1c" stroke-width="0.3" textLength="102" lengthAdjust="spacingAndGlyphs">Frequency (Hz)</text><text transform="translate(34.8 629.7) rotate(-90)" font-size="14.4" fill="#1c1c1c" stroke="#1c1c1c" stroke-width="0.3" textLength="55.6" lengthAdjust="spacingAndGlyphs">SPL (dB)</text><text x="94.4" y="244.4" font-size="14.6" fill="#1c1c1c" stroke="#1c1c1c" stroke-width="0.3" textLength="92.6" lengthAdjust="spacingAndGlyphs">Infinite Baffle</text><path d="M90.5 252.3H191" stroke="#1a1aff" stroke-width="1.7"/><text x="201.5" y="244.4" font-size="14.6" fill="#1c1c1c" stroke="#1c1c1c" stroke-width="0.3" textLength="41.5" lengthAdjust="spacingAndGlyphs">Driver</text><path d="M197.2 252.3H246.4" stroke="#ff1a1a" stroke-width="1.7"/><text x="256" y="244.4" font-size="14.6" fill="#1c1c1c" stroke="#1c1c1c" stroke-width="0.3" textLength="64.5" lengthAdjust="spacingAndGlyphs">Terminus</text><path d="M252.8 252.3H324.5" stroke="#a83232" stroke-width="1.7"/><text x="334" y="244.4" font-size="14.6" fill="#1c1c1c" stroke="#1c1c1c" stroke-width="0.3" textLength="50.0" lengthAdjust="spacingAndGlyphs">System</text><path d="M330.7 252.3H387.5" stroke="#222222" stroke-width="1.7"/></svg>
<div id="enclosure">
<div class="a" style="left:1029.5px;top:0px;width:860px;height:47px;background:#ffffff;"></div>
<span id="t22" class="t " style="left:1041px;top:16.65px;font-size:16.6px;line-height:16.6px;color:#000000;">Enclosure</span>
<div class="a" style="left:1861px;top:12px;width:28px;height:30px;background:#c75050;"></div>
<svg style="left:1861px;top:12px" width="28" height="30" viewBox="0 0 28 30"><clipPath id="xc"><rect x="8" y="11.8" width="15" height="7.5"/></clipPath><path clip-path="url(#xc)" d="M11.2 11.2 L19.8 20 M19.8 11.2 L11.2 20" stroke="#ffffff" stroke-width="2.9" fill="none"/></svg>
<div class="a" style="left:1029px;top:46.2px;width:412.5px;height:964.8px;background:#ffffff;border-top:1.6px solid #777777;"></div>
<div class="a" style="left:1029px;top:48px;width:412px;height:36px;background:linear-gradient(#fdfdfd,#f4f4f4 60%,#ebebeb);"></div>
<svg class="soft" style="left:1032px;top:51px" width="30" height="30" viewBox="1032 51 30 30"><defs><linearGradient id="po" x1="0" y1="0" x2="0" y2="1"><stop offset="0" stop-color="#4fabe8"/><stop offset="1" stop-color="#8edafa"/></linearGradient></defs><circle cx="1045.9" cy="65.5" r="11.3" fill="url(#po)" stroke="#4593dc" stroke-width="1.4"/><circle cx="1045.9" cy="65.5" r="8.9" fill="none" stroke="#9fdcfa" stroke-width="1.2" opacity="0.7"/><path d="M1052.6 65.5 L1040.6 58.7 V72.3 Z" fill="#ffffff" stroke="#4a9be0" stroke-width="0.9" stroke-linejoin="round"/></svg>
<svg class="" style="left:1062.10px;top:47.20px" width="38.20" height="36.70"><rect x="2.95" y="2.95" width="32.30" height="30.80" rx="0" fill="rgba(255,255,255,0.35)" stroke="#2585e0" stroke-width="1.9"/></svg>
<svg class="soft" style="left:1064px;top:49px" width="34" height="33" viewBox="1064 49 34 33"><defs><linearGradient id="wr" x1="1" y1="0" x2="0" y2="1"><stop offset="0" stop-color="#74bcec"/><stop offset="0.45" stop-color="#4a9fde"/><stop offset="1" stop-color="#0f68bc"/></linearGradient></defs><path d="M1068.8 73.4 L1078.2 64.8 Q1077.2 61 1078.2 58.2 L1082.2 54.2 Q1084.6 53.4 1086.6 54.1 L1087.6 55.3 L1083.2 59.4 Q1082 61.4 1083.4 62.8 Q1084.8 64.2 1086.4 62.6 L1090.3 58.3 L1092.2 60.2 Q1092.8 61.8 1091.9 63.1 L1087.9 67.3 Q1085 68.4 1082.3 67.6 L1072.6 77.4 Z" fill="url(#wr)" stroke="#1f78cc" stroke-width="1.1" stroke-linejoin="round"/></svg>
<div class="a" style="left:1102.6px;top:55px;width:1.7px;height:22px;background:#c6c6c6;"></div>
<svg class="" style="left:1105.60px;top:47.10px" width="62.80" height="36.80"><rect x="2.95" y="2.95" width="56.90" height="30.90" rx="0" fill="rgba(255,255,255,0.35)" stroke="#2585e0" stroke-width="1.9"/></svg>
<svg class="" style="left:1162.80px;top:47.10px" width="56.00" height="36.80"><rect x="2.95" y="2.95" width="50.10" height="30.90" rx="0" fill="rgba(255,255,255,0.35)" stroke="#2585e0" stroke-width="1.9"/></svg>
<span id="t23" class="t soft" style="left:1115.5px;top:57.16px;font-size:18px;line-height:18px;color:#1a1a1a;transform:scaleX(0.9901);">Front</span>
<span id="t24" class="t soft" style="left:1174px;top:57.16px;font-size:18px;line-height:18px;color:#1a1a1a;transform:scaleX(0.8714);">Rear</span>
<div class="a" style="left:1221.4px;top:55px;width:1.7px;height:22px;background:#c6c6c6;"></div>
<span id="t25" class="t soft" style="left:1233.8px;top:57.16px;font-size:18px;line-height:18px;color:#1a1a1a;transform:scaleX(0.9444);">Wizard</span>
<svg style="left:1294px;top:62px" width="12" height="8" viewBox="0 0 12 8"><path d="M1.6 1.6 H9.6 L5.6 6 Z" fill="#1a1a1a"/></svg>
<div class="a" style="left:1314.4px;top:55px;width:1.7px;height:22px;background:#c6c6c6;"></div>
<div class="a" style="left:1424px;top:48.6px;width:15.4px;height:34.6px;background:linear-gradient(#f6f6f6,#e2e2e2 45%,#c6c6c6);border-radius:0 0 4px 0;"></div>
<svg class="soft" style="left:1424px;top:66px" width="16" height="17" viewBox="1424 66 16 17"><path d="M1428.2 71.4 H1435.6" stroke="#ffffff" stroke-width="1.5"/><path d="M1428 76.6 H1436 L1432 80.8 Z" fill="#ffffff"/><path d="M1427.2 70.4 H1434.6" stroke="#111" stroke-width="1.6"/><path d="M1427 75.5 H1435 L1431 79.8 Z" fill="#111"/></svg>
<svg class="soft" style="left:1029px;top:84px" width="412" height="927" viewBox="1029 84 412 927"><path d="M1157.2 340 L1157.2 403 L1156 403 L1156 497 L1154.6 497 L1154.6 590 L1153.2 590 L1153.2 683 L1151.8 683 L1151.8 776 L1150.2 776 L1150.2 869.5 L1148.6 869.5 L1148.6 963 L1147 963 L1147 1010.5 L1213.1 1010.5 L1213.1 957 L1211.6 957 L1211.6 863.5 L1210.1 863.5 L1210.1 770 L1208.5 770 L1208.5 677 L1207 677 L1207 584.5 L1205.4 584.5 L1205.4 491 L1204 491 L1204 398.6 L1202.7 398.6 L1202.7 340 Z" fill="#bebebe"/><path d="M1147 1010.5 L1147 963 L1148.6 963 L1148.6 869.5 L1150.2 869.5 L1150.2 776 L1151.8 776 L1151.8 683 L1153.2 683 L1153.2 590 L1154.6 590 L1154.6 497 L1156 497 L1156 403 L1157.2 403 L1157.2 340 L1202.7 340 L1202.7 398.6 L1204 398.6 L1204 491 L1205.4 491 L1205.4 584.5 L1207 584.5 L1207 677 L1208.5 677 L1208.5 770 L1210.1 770 L1210.1 863.5 L1211.6 863.5 L1211.6 957 L1213.1 957 L1213.1 1010.5" fill="none" stroke="#2a2af0" stroke-width="1.5"/><path d="M1180.2 341 V376" stroke="#8a8a8a" stroke-width="1" stroke-dasharray="1.2 1.6"/><rect x="1197.6" y="335.6" width="9" height="9" fill="#ff0000"/><rect x="1176.4" y="374.8" width="7.4" height="7.4" fill="#ff0000"/><circle cx="1180.1" cy="742" r="75.3" fill="none" stroke="#222" stroke-width="1.3" stroke-dasharray="4 3.2"/><rect x="1175" y="737.2" width="9.4" height="9.6" fill="#2424b8"/></svg>
<div class="a" style="left:1029px;top:1010.5px;width:412.5px;height:33.5px;background:#f0f0f0;border-top:1px solid #dcdcdc;"></div>
<div class="a" style="left:1433.1px;top:1025.3px;width:3.2px;height:3.2px;background:#a3a3a3;"></div>
<div class="a" style="left:1427.2px;top:1031.2px;width:3.2px;height:3.2px;background:#a3a3a3;"></div>
<div class="a" style="left:1433.1px;top:1031.2px;width:3.2px;height:3.2px;background:#a3a3a3;"></div>
<div class="a" style="left:1421.3px;top:1037.1px;width:3.2px;height:3.2px;background:#a3a3a3;"></div>
<div class="a" style="left:1427.2px;top:1037.1px;width:3.2px;height:3.2px;background:#a3a3a3;"></div>
<div class="a" style="left:1433.1px;top:1037.1px;width:3.2px;height:3.2px;background:#a3a3a3;"></div>
<div class="a" style="left:1441px;top:47px;width:6px;height:997px;background:#f0f0f0;"></div>
<svg style="left:1438px;top:46px" width="12" height="998" viewBox="1438 46 12 998"><path d="M1441.15 46 V1044 M1447.15 46 V1044" stroke="#6a6a6a" stroke-width="1.4"/></svg>
<div class="a" style="left:1420px;top:510px;width:21.4px;height:75px;background:#f0f0f0;border:1.3px solid #767676;border-right:none;"></div>
<span id="t26" class="t soft" style="left:1425.5px;top:542.36px;font-size:16px;line-height:16px;color:#333;">&gt;</span>
</div>
<div id="props">
<div class="a" style="left:1447.5px;top:46.5px;width:442px;height:997.5px;background:#f0f0f0;"></div>
<div class="a" style="left:1447.5px;top:46.8px;width:442px;height:33.4px;background:#ababab;"></div>
<svg class="soft" style="left:1452px;top:57.8px" width="17" height="13" viewBox="0 0 17 13"><path d="M0.5 0.4 H15.8 L8.2 11.6 Z" fill="#0c82c8"/></svg>
<span id="t27" class="t soft" style="left:1477.2px;top:55.99px;font-size:18.2px;line-height:18.2px;color:#0a0a0a;font-weight:bold;">Element: Rear.0</span>
<span id="t28" class="t soft" style="left:1452.4px;top:89.56px;font-size:18.6px;line-height:18.6px;color:#0f0f0f;transform:scaleX(0.8405);">Start Area</span>
<svg class="soft" style="left:1541.00px;top:78.60px" width="277.50" height="33.60"><rect x="2.77" y="2.77" width="271.95" height="28.05" rx="0" fill="#ffffff" stroke="#6a6a6a" stroke-width="1.55"/></svg>
<span id="t29" class="t soft" style="left:1547.2px;top:86.76px;font-size:18.6px;line-height:18.6px;color:#0f0f0f;transform:scaleX(0.8508);">500</span>
<svg class="soft" style="left:1821.7px;top:87.0px" width="19" height="19" viewBox="0 0 19 19"><rect x="0.75" y="0.75" width="17.5" height="17.5" fill="#ffffff" stroke="#333333" stroke-width="1.5"/></svg>
<span id="t30" class="t soft" style="left:1850.5px;top:89.56px;font-size:18.6px;line-height:18.6px;color:#0f0f0f;transform:scaleX(0.8972);">cm²</span>
<span id="t31" class="t soft" style="left:1452.4px;top:122.56px;font-size:18.6px;line-height:18.6px;color:#0f0f0f;transform:scaleX(0.8444);">End Area</span>
<svg class="soft" style="left:1541.00px;top:111.60px" width="277.50" height="33.60"><rect x="2.77" y="2.77" width="271.95" height="28.05" rx="0" fill="#ffffff" stroke="#6a6a6a" stroke-width="1.55"/></svg>
<span id="t32" class="t soft" style="left:1547.2px;top:119.76px;font-size:18.6px;line-height:18.6px;color:#0f0f0f;transform:scaleX(0.8508);">900</span>
<svg class="soft" style="left:1821.7px;top:120.0px" width="19" height="19" viewBox="0 0 19 19"><rect x="0.75" y="0.75" width="17.5" height="17.5" fill="#ffffff" stroke="#333333" stroke-width="1.5"/></svg>
<span id="t33" class="t soft" style="left:1850.5px;top:122.56px;font-size:18.6px;line-height:18.6px;color:#0f0f0f;transform:scaleX(0.8972);">cm²</span>
<span id="t34" class="t soft" style="left:1452.4px;top:155.56px;font-size:18.6px;line-height:18.6px;color:#0f0f0f;transform:scaleX(0.8665);">Taper Ratio</span>
<svg class="soft" style="left:1541.00px;top:145.00px" width="277.50" height="32.80"><rect x="2.75" y="2.75" width="272.00" height="27.30" rx="0" fill="#efefef" stroke="#d0d0d0" stroke-width="1.5"/></svg>
<span id="t35" class="t soft" style="left:1547.2px;top:152.76px;font-size:18.6px;line-height:18.6px;color:#8c8c8c;transform:scaleX(0.8430);">1,8</span>
<svg class="soft" style="left:1821.7px;top:152.8px" width="19" height="19" viewBox="0 0 19 19"><rect x="0.75" y="0.75" width="17.5" height="17.5" fill="#e6e6e6" stroke="#bcbcbc" stroke-width="1.5"/><path d="M3.3 9.5 L7.3 13.7 L15.9 4.3" fill="none" stroke="#b0b0b0" stroke-width="1.9"/></svg>
<span id="t36" class="t soft" style="left:1452.4px;top:188.56px;font-size:18.6px;line-height:18.6px;color:#0f0f0f;transform:scaleX(0.8881);">Taper Type</span>
<svg class="soft" style="left:1541.00px;top:177.70px" width="307.80" height="34.80"><rect x="2.77" y="2.77" width="302.25" height="29.25" rx="0" fill="#ffffff" stroke="#6a6a6a" stroke-width="1.55"/></svg>
<span id="t37" class="t soft" style="left:1547.2px;top:185.56px;font-size:18.6px;line-height:18.6px;color:#0f0f0f;transform:scaleX(0.8358);">Parabolic</span>
<svg class="soft" style="left:1826px;top:190.2px" width="16" height="10" viewBox="0 0 16 10"><path d="M1.6 1.6 L7.6 7.8 L13.6 1.6" fill="none" stroke="#3a3a3a" stroke-width="1.5"/></svg>
<span id="t38" class="t soft" style="left:1452.4px;top:221.56px;font-size:18.6px;line-height:18.6px;color:#0f0f0f;transform:scaleX(0.8457);">Hyp-Exp T</span>
<svg class="soft" style="left:1541.00px;top:211.00px" width="307.80" height="32.80"><rect x="2.75" y="2.75" width="302.30" height="27.30" rx="0" fill="#efefef" stroke="#d0d0d0" stroke-width="1.5"/></svg>
<span id="t39" class="t soft" style="left:1452.4px;top:254.56px;font-size:18.6px;line-height:18.6px;color:#0f0f0f;transform:scaleX(0.8510);">Length</span>
<svg class="soft" style="left:1541.00px;top:243.60px" width="307.80" height="33.60"><rect x="2.77" y="2.77" width="302.25" height="28.05" rx="0" fill="#ffffff" stroke="#6a6a6a" stroke-width="1.55"/></svg>
<span id="t40" class="t soft" style="left:1547.2px;top:251.76px;font-size:18.6px;line-height:18.6px;color:#0f0f0f;transform:scaleX(0.8508);">250</span>
<span id="t41" class="t soft" style="left:1851.3px;top:254.56px;font-size:18.6px;line-height:18.6px;color:#0f0f0f;transform:scaleX(0.8428);">cm</span>
<span id="t42" class="t soft" style="left:1452.4px;top:287.56px;font-size:18.6px;line-height:18.6px;color:#0f0f0f;transform:scaleX(0.8242);">Angle</span>
<svg class="soft" style="left:1541.00px;top:276.60px" width="307.80" height="33.60"><rect x="2.77" y="2.77" width="302.25" height="28.05" rx="0" fill="#ffffff" stroke="#6a6a6a" stroke-width="1.55"/></svg>
<span id="t43" class="t soft" style="left:1547.2px;top:284.76px;font-size:18.6px;line-height:18.6px;color:#0f0f0f;transform:scaleX(0.8556);">90</span>
<span id="t44" class="t soft" style="left:1851.5px;top:287.56px;font-size:18.6px;line-height:18.6px;color:#0f0f0f;transform:scaleX(0.8352);">Deg</span>
<span id="t45" class="t soft" style="left:1452.4px;top:320.56px;font-size:18.6px;line-height:18.6px;color:#0f0f0f;transform:scaleX(0.8328);">Boundary</span>
<svg class="soft" style="left:1543px;top:318.2px" width="19" height="19" viewBox="0 0 19 19"><rect x="0.75" y="0.75" width="17.5" height="17.5" fill="#ffffff" stroke="#333333" stroke-width="1.5"/><path d="M3.3 9.5 L7.3 13.7 L15.9 4.3" fill="none" stroke="#3a3a3a" stroke-width="1.9"/></svg>
<span id="t46" class="t soft" style="left:1570.3px;top:317.76px;font-size:18.6px;line-height:18.6px;color:#0f0f0f;transform:scaleX(0.8462);">Open</span>
<span id="t47" class="t soft" style="left:1452.4px;top:353.56px;font-size:18.6px;line-height:18.6px;color:#0f0f0f;transform:scaleX(0.8387);">Stuffing</span>
<svg class="soft" style="left:1541.00px;top:342.60px" width="307.80" height="33.60"><rect x="2.77" y="2.77" width="302.25" height="28.05" rx="0" fill="#ffffff" stroke="#6a6a6a" stroke-width="1.55"/></svg>
<span id="t48" class="t soft" style="left:1547.6px;top:350.76px;font-size:18.6px;line-height:18.6px;color:#0f0f0f;">2</span>
<span id="t49" class="t soft" style="left:1849.8px;top:353.56px;font-size:18.6px;line-height:18.6px;color:#0f0f0f;transform:scaleX(0.9831);">kg/m³</span>
<span id="t50" class="t soft" style="left:1452.4px;top:386.56px;font-size:18.6px;line-height:18.6px;color:#0f0f0f;transform:scaleX(0.8286);">Volume</span>
<span id="t51" class="t soft" style="left:1548px;top:386.86px;font-size:18.6px;line-height:18.6px;color:#0f0f0f;transform:scaleX(0.8250);">175</span>
<span id="t52" class="t soft" style="left:1852.6px;top:386.56px;font-size:18.6px;line-height:18.6px;color:#0f0f0f;">l</span>
<div class="a" style="left:1447.5px;top:411px;width:442px;height:32.4px;background:#ababab;"></div>
<svg class="soft" style="left:1452px;top:420.4px" width="17" height="13" viewBox="0 0 17 13"><path d="M0.5 0.4 H15.8 L8.2 11.6 Z" fill="#0c82c8"/></svg>
<span id="t53" class="t soft" style="left:1477.2px;top:418.39px;font-size:18.2px;line-height:18.2px;color:#0a0a0a;font-weight:bold;transform:scaleX(1.0100);">Model Info - Rear</span>
<span id="t54" class="t soft" style="left:1452.4px;top:452.56px;font-size:18.6px;line-height:18.6px;color:#0f0f0f;transform:scaleX(0.8584);">Depth</span>
<svg class="soft" style="left:1541.00px;top:441.60px" width="307.80" height="33.60"><rect x="2.77" y="2.77" width="302.25" height="28.05" rx="0" fill="#ffffff" stroke="#6a6a6a" stroke-width="1.55"/></svg>
<span id="t55" class="t soft" style="left:1547.2px;top:449.76px;font-size:18.6px;line-height:18.6px;color:#0f0f0f;transform:scaleX(0.8653);">49,56603641212</span>
<span id="t56" class="t soft" style="left:1851.3px;top:452.56px;font-size:18.6px;line-height:18.6px;color:#0f0f0f;transform:scaleX(0.8428);">cm</span>
<span id="t57" class="t soft" style="left:1452.4px;top:485.56px;font-size:18.6px;line-height:18.6px;color:#0f0f0f;transform:scaleX(0.8286);">Volume</span>
<span id="t58" class="t soft" style="left:1548px;top:485.86px;font-size:18.6px;line-height:18.6px;color:#0f0f0f;transform:scaleX(0.8250);">175</span>
<span id="t59" class="t soft" style="left:1852.6px;top:485.56px;font-size:18.6px;line-height:18.6px;color:#0f0f0f;">l</span>
<span id="t60" class="t soft" style="left:1452.4px;top:518.56px;font-size:18.6px;line-height:18.6px;color:#0f0f0f;transform:scaleX(0.8510);">Length</span>
<span id="t61" class="t soft" style="left:1547.2px;top:518.86px;font-size:18.6px;line-height:18.6px;color:#0f0f0f;transform:scaleX(0.8508);">250</span>
<span id="t62" class="t soft" style="left:1851.3px;top:518.56px;font-size:18.6px;line-height:18.6px;color:#0f0f0f;transform:scaleX(0.8428);">cm</span>
<span id="t63" class="t soft" style="left:1452.4px;top:550.76px;font-size:18.6px;line-height:18.6px;color:#0f0f0f;transform:scaleX(0.8859);">Tap Pos.</span>
<svg class="soft" style="left:1541.00px;top:541.00px" width="307.80" height="32.80"><rect x="2.75" y="2.75" width="302.30" height="27.30" rx="0" fill="#efefef" stroke="#d0d0d0" stroke-width="1.5"/></svg>
<span id="t64" class="t soft" style="left:1547.2px;top:548.76px;font-size:18.6px;line-height:18.6px;color:#8c8c8c;transform:scaleX(0.8508);">250</span>
<span id="t65" class="t soft" style="left:1851.3px;top:551.56px;font-size:18.6px;line-height:18.6px;color:#0f0f0f;transform:scaleX(0.8428);">cm</span>
<span id="t66" class="t soft" style="left:1452.4px;top:584.56px;font-size:18.6px;line-height:18.6px;color:#0f0f0f;transform:scaleX(0.8406);">Driver Pos.</span>
<svg class="soft" style="left:1540.40px;top:573.20px" width="308.80" height="34.40"><rect x="3.00" y="3.00" width="302.80" height="28.40" rx="0" fill="#ffffff" stroke="#1379d8" stroke-width="2.0"/></svg>
<span id="t67" class="t soft" style="left:1547.2px;top:581.76px;font-size:18.6px;line-height:18.6px;color:#0f0f0f;transform:scaleX(0.8411);">91</span>
<span id="t68" class="t soft" style="left:1851.3px;top:584.56px;font-size:18.6px;line-height:18.6px;color:#0f0f0f;transform:scaleX(0.8428);">cm</span>
<div class="a" style="left:1566.0px;top:580.8px;width:1.3px;height:18.4px;background:#111;"></div>
<div class="a" style="left:1447.5px;top:608.6px;width:442px;height:32.2px;background:#ababab;"></div>
<svg class="soft" style="left:1452px;top:619.0px" width="17" height="13" viewBox="0 0 17 13"><path d="M0.5 0.4 H15.8 L8.2 11.6 Z" fill="#0c82c8"/></svg>
<span id="t69" class="t soft" style="left:1477.2px;top:616.99px;font-size:18.2px;line-height:18.2px;color:#0a0a0a;font-weight:bold;transform:scaleX(0.9743);">Model Info - Front</span>
<span id="t70" class="t soft" style="left:1452.4px;top:650.56px;font-size:18.6px;line-height:18.6px;color:#0f0f0f;transform:scaleX(0.8286);">Volume</span>
<span id="t71" class="t soft" style="left:1547.2px;top:650.86px;font-size:18.6px;line-height:18.6px;color:#0f0f0f;">0</span>
<span id="t72" class="t soft" style="left:1852.6px;top:650.56px;font-size:18.6px;line-height:18.6px;color:#0f0f0f;">l</span>
<span id="t73" class="t soft" style="left:1452.4px;top:683.56px;font-size:18.6px;line-height:18.6px;color:#0f0f0f;transform:scaleX(0.8510);">Length</span>
<span id="t74" class="t soft" style="left:1547.2px;top:683.86px;font-size:18.6px;line-height:18.6px;color:#0f0f0f;">0</span>
<span id="t75" class="t soft" style="left:1851.3px;top:683.56px;font-size:18.6px;line-height:18.6px;color:#0f0f0f;transform:scaleX(0.8428);">cm</span>
<svg style="left:1446px;top:44px" width="443" height="6" viewBox="1446 44 443 6"><path d="M1446.4 47 H1889" stroke="#707070" stroke-width="1.5"/></svg>
</div>
<div class="a" style="left:0px;top:1043.7px;width:1889px;height:3.3px;background:#0a0a0a;"></div>
</body></html>
